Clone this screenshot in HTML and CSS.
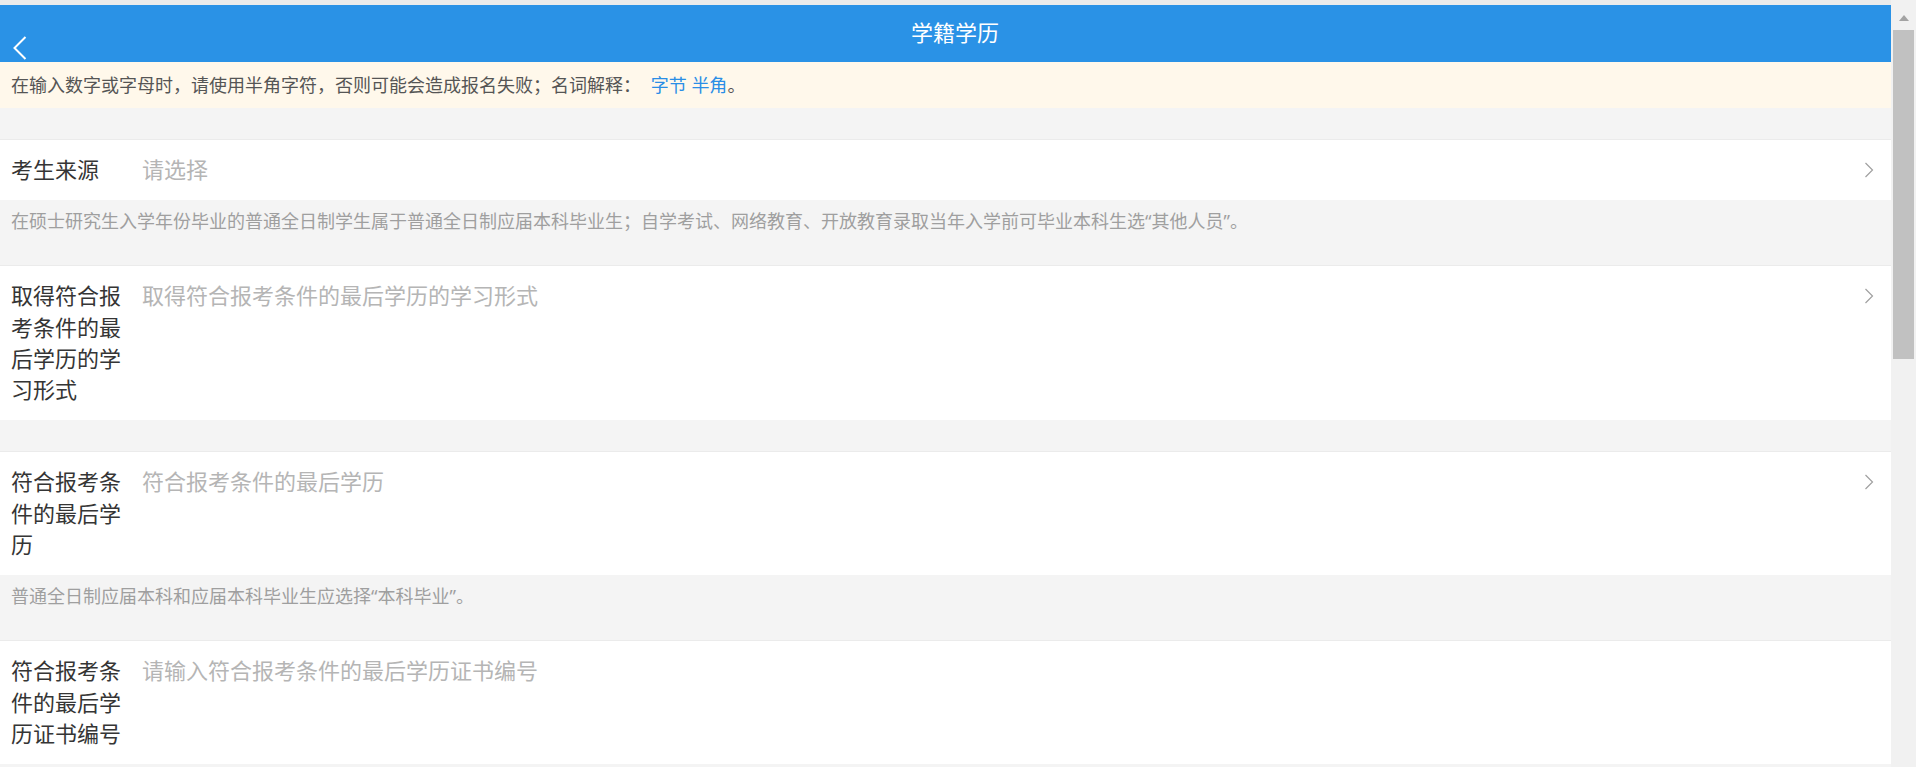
FILE: index.html
```html
<!DOCTYPE html>
<html lang="zh-CN">
<head>
<meta charset="utf-8">
<title>学籍学历</title>
<link rel="stylesheet" href="styles.css">
</head>
<body>
<div class="app">
  <main class="page">
    <div class="top-strip"></div>
    <header class="header">
      <div class="back">
        <svg width="14" height="24" viewBox="0 0 14 24" aria-hidden="true"><path d="M12.5 1 L1.5 12 L12.5 23" fill="none" stroke="#fff" stroke-width="2"/></svg>
      </div>
      <h1 class="title">学籍学历</h1>
      <div class="spacer"></div>
    </header>
    <div class="notice">在输入数字或字母时，请使用半角字符，否则可能会造成报名失败；名词解释： <a class="link first">字节</a> <a class="link">半角</a>。</div>

    <section class="section">
      <div class="row">
        <div class="label">考生来源</div>
        <div class="value">请选择</div>
        <div class="arrow"><svg width="10" height="16" viewBox="0 0 10 16"><path d="M1.5 1 L8.5 8 L1.5 15" fill="none" stroke="#a0a0a0" stroke-width="1.2"/></svg></div>
      </div>
      <div class="hint">在硕士研究生入学年份毕业的普通全日制学生属于普通全日制应届本科毕业生；自学考试、网络教育、开放教育录取当年入学前可毕业本科生选“其他人员”。</div>
    </section>

    <section class="section">
      <div class="row">
        <div class="label">取得符合报考条件的最后学历的学习形式</div>
        <div class="value">取得符合报考条件的最后学历的学习形式</div>
        <div class="arrow"><svg width="10" height="16" viewBox="0 0 10 16"><path d="M1.5 1 L8.5 8 L1.5 15" fill="none" stroke="#a0a0a0" stroke-width="1.2"/></svg></div>
      </div>
    </section>

    <section class="section">
      <div class="row">
        <div class="label">符合报考条件的最后学历</div>
        <div class="value">符合报考条件的最后学历</div>
        <div class="arrow"><svg width="10" height="16" viewBox="0 0 10 16"><path d="M1.5 1 L8.5 8 L1.5 15" fill="none" stroke="#a0a0a0" stroke-width="1.2"/></svg></div>
      </div>
      <div class="hint">普通全日制应届本科和应届本科毕业生应选择“本科毕业”。</div>
    </section>

    <section class="section">
      <div class="row">
        <div class="label">符合报考条件的最后学历证书编号</div>
        <div class="value">请输入符合报考条件的最后学历证书编号</div>
      </div>
    </section>
  </main>
  <aside class="scrollbar">
    <div class="scroll-up"></div>
    <div class="scroll-thumb"></div>
  </aside>
</div>
</body>
</html>
```

FILE: styles.css
```css
* { box-sizing: border-box; }
html, body {
  margin: 0;
  padding: 0;
  height: 100%;
  overflow: hidden;
}
body {
  font-family: "Noto Sans", "Noto Sans CJK SC", sans-serif;
  background: #f4f4f4;
  color: #333;
}
.app {
  display: flex;
  height: 767px;
}
.page {
  flex: 1;
  min-width: 0;
  background: #f4f4f4;
}
.top-strip {
  height: 5px;
  background: #ebebeb;
}
.header {
  display: flex;
  height: 57px;
  background: #2a92e6;
  color: #fff;
}
.back {
  width: 40px;
  display: flex;
  align-items: flex-end;
  padding-left: 13px;
  padding-bottom: 2px;
}
.back svg { display: block; }
.title {
  flex: 1;
  margin: 0;
  text-align: center;
  font-size: 22px;
  font-weight: normal;
  line-height: 55px;
}
.spacer { width: 21px; }
.notice {
  height: 46px;
  line-height: 46px;
  padding-left: 11px;
  background: #fff8eb;
  color: #555;
  font-size: 18px;
  margin-bottom: 31px;
  white-space: nowrap;
}
.link { color: #2a8ee6; }
.link.first { margin-left: 5px; }
.section { margin-bottom: 31px; }
.row {
  display: flex;
  align-items: flex-start;
  background: #fff;
  border-top: 1px solid #ebebeb;
  padding: 14px 0 15px 11px;
  font-size: 22px;
  line-height: 31.3px;
}
.label {
  width: 120px;
  flex: none;
  margin-right: 11px;
  color: #353535;
}
.value {
  flex: 1;
  color: #b5b5b5;
}
.arrow {
  flex: none;
  height: 31px;
  width: 10px;
  margin-right: 17px;
  display: flex;
  align-items: center;
}
.arrow svg { display: block; }
.hint {
  padding: 10px 11px 2px;
  font-size: 18px;
  line-height: 22px;
  color: #9f9f9f;
  background: #f4f4f4;
}
.scrollbar {
  width: 25px;
  flex: none;
  background: #f1f1f1;
  display: flex;
  flex-direction: column;
  align-items: center;
}
.scroll-up {
  margin-top: 15px;
  width: 0;
  height: 0;
  border-left: 5.5px solid transparent;
  border-right: 5.5px solid transparent;
  border-bottom: 6px solid #a3a3a3;
}
.scroll-thumb {
  margin-top: 9px;
  width: 21px;
  height: 329px;
  background: #c1c1c1;
}
```
